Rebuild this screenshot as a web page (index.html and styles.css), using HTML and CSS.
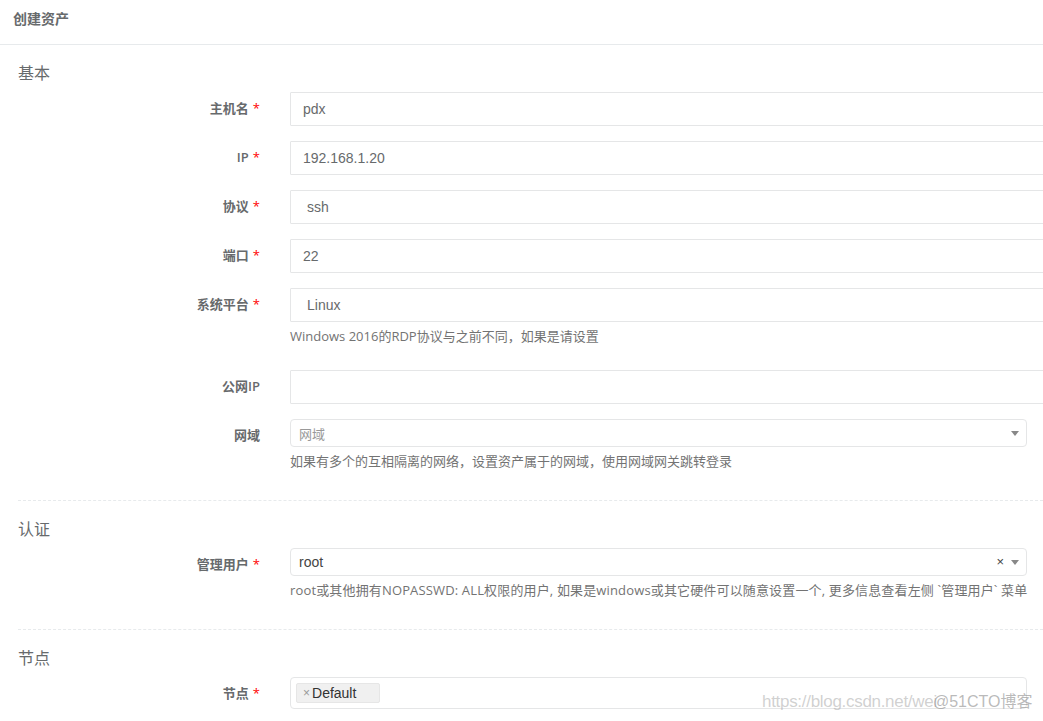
FILE: index.html
```html
<!DOCTYPE html>
<html lang="zh-CN">
<head>
<meta charset="utf-8">
<title>创建资产</title>
<link rel="stylesheet" href="styles.css">
</head>
<body>
<div class="ibox">
  <div class="ibox-title">创建资产</div>
  <div class="ibox-content">
    <h3 class="section-title">基本</h3>
    <div class="form-group">
      <label class="control-label">主机名<span class="req">*</span></label>
      <div class="control"><div class="form-control">pdx</div></div>
    </div>
    <div class="form-group">
      <label class="control-label">IP<span class="req">*</span></label>
      <div class="control"><div class="form-control">192.168.1.20</div></div>
    </div>
    <div class="form-group">
      <label class="control-label">协议<span class="req">*</span></label>
      <div class="control"><div class="form-control select-native">ssh</div></div>
    </div>
    <div class="form-group">
      <label class="control-label">端口<span class="req">*</span></label>
      <div class="control"><div class="form-control">22</div></div>
    </div>
    <div class="form-group">
      <label class="control-label">系统平台<span class="req">*</span></label>
      <div class="control">
        <div class="form-control select-native">Linux</div>
        <div class="help-block">Windows 2016的RDP协议与之前不同，如果是请设置</div>
      </div>
    </div>
    <div class="form-group">
      <label class="control-label">公网IP</label>
      <div class="control"><div class="form-control"></div></div>
    </div>
    <div class="form-group">
      <label class="control-label">网域</label>
      <div class="control">
        <div class="select2 single">
          <span class="placeholder">网域</span>
          <span class="arrow"></span>
        </div>
        <div class="help-block">如果有多个的互相隔离的网络，设置资产属于的网域，使用网域网关跳转登录</div>
      </div>
    </div>

    <div class="hr-dashed"></div>

    <h3 class="section-title">认证</h3>
    <div class="form-group">
      <label class="control-label">管理用户<span class="req">*</span></label>
      <div class="control">
        <div class="select2 single">
          <span class="value">root</span>
          <span class="clear">×</span>
          <span class="arrow"></span>
        </div>
        <div class="help-block wide">root或其他拥有NOPASSWD: ALL权限的用户, 如果是windows或其它硬件可以随意设置一个, 更多信息查看左侧 `管理用户` 菜单</div>
      </div>
    </div>

    <div class="hr-dashed"></div>

    <h3 class="section-title">节点</h3>
    <div class="form-group">
      <label class="control-label">节点<span class="req">*</span></label>
      <div class="control">
        <div class="select2 multiple">
          <span class="tag"><span class="tag-x">×</span>Default</span>
        </div>
      </div>
    </div>
  </div>
</div>
<div class="watermark"><span class="wm-url">https://blog.csdn.net/wei</span><span class="wm-site">@51CTO博客</span></div>
</body>
</html>
```

FILE: styles.css
```css
html, body {
  margin: 0;
  padding: 0;
  background: #ffffff;
  overflow: hidden;
}
body {
  font-family: "Open Sans", "Noto Sans CJK SC", sans-serif;
  font-size: 13px;
  color: #676a6c;
  width: 1043px;
  height: 721px;
  position: relative;
}
.ibox-title {
  height: 34px;
  padding: 10px 13px 0;
  border-bottom: 1px solid #e7eaec;
  font-size: 14px;
  line-height: 18px;
  font-weight: 600;
  color: #676a6c;
  box-sizing: content-box;
}
.ibox-content {
  padding: 0 0 0 18px;
  overflow: hidden;
}
.section-title {
  font-size: 16px;
  line-height: 20px;
  font-weight: 400;
  margin: 18px 0 9px;
  color: #676a6c;
}
.form-group {
  display: flex;
  margin-bottom: 15px;
}
.control-label {
  width: 242px;
  flex: 0 0 242px;
  margin-right: 30px;
  text-align: right;
  font-weight: 600;
  font-size: 13px;
  line-height: 18px;
  padding-top: 7px;
  color: #676a6c;
}
.req {
  color: #ff0000;
  margin-left: 4px;
  font-weight: 400;
}
.control {
  flex: 0 0 760px;
  width: 760px;
}
.form-control {
  box-sizing: border-box;
  height: 34px;
  width: 760px;
  border: 1px solid #e5e6e7;
  border-radius: 1px;
  padding: 6px 12px;
  font-family: "Liberation Sans", "Noto Sans CJK SC", sans-serif;
  font-size: 14px;
  line-height: 20px;
  color: #676a6c;
}
.select-native {
  padding-left: 16px;
}
.help-block {
  margin: 5px 0 10px;
  font-size: 13px;
  line-height: 18px;
  color: #737373;
  white-space: nowrap;
}
.help-block.wide {
  letter-spacing: 0.15px;
}
.select2 {
  box-sizing: border-box;
  width: 737px;
  border: 1px solid #e5e6e7;
  border-radius: 4px;
  position: relative;
  font-family: "Liberation Sans", "Noto Sans CJK SC", sans-serif;
}
.select2.single {
  height: 28px;
  display: flex;
  align-items: center;
  padding-left: 8px;
}
.placeholder {
  color: #999999;
  font-size: 13px;
}
.value {
  color: #444444;
  font-size: 14px;
}
.clear {
  position: absolute;
  right: 22px;
  top: 6px;
  font-size: 13px;
  line-height: 14px;
  color: #444444;
}
.arrow {
  position: absolute;
  right: 7px;
  top: 11px;
  width: 0;
  height: 0;
  border-left: 4px solid transparent;
  border-right: 4px solid transparent;
  border-top: 5px solid #888888;
}
.select2.multiple {
  height: 32px;
  padding: 5px 0 0 5px;
}
.tag {
  display: inline-flex;
  align-items: center;
  box-sizing: border-box;
  height: 20px;
  width: 84px;
  background: #f0f0f0;
  border: 1px solid #e6e6e6;
  border-radius: 2px;
  padding-left: 6px;
  font-size: 14px;
  color: #333333;
}
.tag-x {
  color: #999999;
  font-size: 12px;
  margin-right: 2px;
}
.hr-dashed {
  border-top: 1px dashed #e7eaec;
  margin: 20px 0 18px;
  height: 0;
}
.watermark {
  position: absolute;
  left: 762px;
  top: 692px;
  font-family: "Liberation Sans", "Noto Sans CJK SC", sans-serif;
  font-size: 17px;
  line-height: 20px;
  white-space: nowrap;
  color: rgba(170, 170, 170, 0.55);
}
.wm-url {
  letter-spacing: -0.3px;
}
.wm-site {
  margin-left: -4px;
  font-size: 16px;
  color: rgba(140, 140, 140, 0.6);
}
```
